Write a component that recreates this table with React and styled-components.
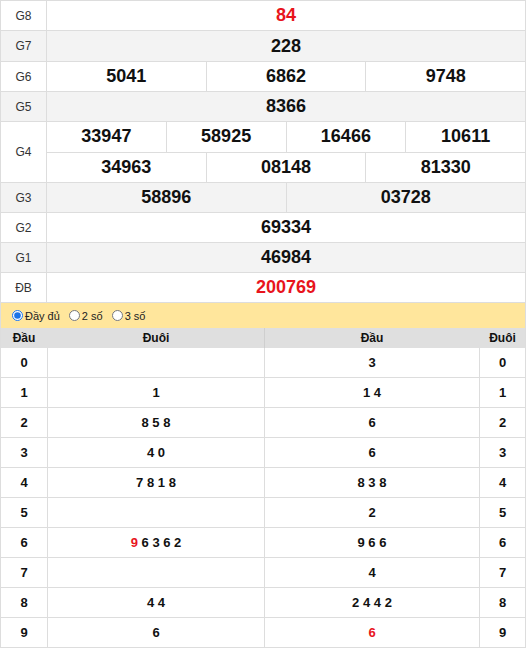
import React from "react";
import styled, { createGlobalStyle } from "styled-components";

const Global = createGlobalStyle`
  html, body { margin: 0; padding: 0; background: #fff; }
  body { font-family: "Liberation Sans", Arial, sans-serif; }
  * { box-sizing: border-box; }
`;

const Wrap = styled.div`
  width: 526px;
  border-left: 1px solid #dddddd;
  border-right: 1px solid #dddddd;
  border-top: 1px solid #dddddd;
`;

const Row = styled.div`
  display: flex;
  height: ${(p) => p.$h || 30}px;
  background: ${(p) => (p.$alt ? "#f3f3f3" : "#ffffff")};
  border-bottom: 1px solid #dddddd;
`;

const Label = styled.div`
  width: 46px;
  flex: none;
  display: flex;
  align-items: center;
  justify-content: center;
  border-right: 1px solid #dddddd;
  font-size: 12px;
  color: #333;
`;

const Values = styled.div`
  flex: 1;
  display: flex;
  flex-direction: column;
`;

const SubRow = styled.div`
  flex: 1;
  display: flex;
  & + & { border-top: 1px solid #dddddd; }
`;

const Num = styled.div`
  flex: 1;
  display: flex;
  align-items: center;
  justify-content: center;
  font-size: 18px;
  font-weight: bold;
  color: ${(p) => (p.$red ? "#e8141c" : "#111")};
  & + & { border-left: 1px solid #dddddd; }
`;

const Bar = styled.div`
  height: 25px;
  background: #ffe69c;
  display: flex;
  align-items: center;
  padding-left: 11px;
  gap: 9px;
  font-size: 11px;
  color: #222;
`;

const Opt = styled.label`
  display: flex;
  align-items: center;
  gap: 2px;
  input {
    width: 11px;
    height: 11px;
    margin: 0;
    accent-color: #1a73e8;
  }
`;

const Grid = styled.div`
  display: grid;
  grid-template-columns: 46px 217px 215px 46px;
`;

const Head = styled.div`
  height: 20px;
  background: #dfdfdf;
  display: flex;
  align-items: center;
  justify-content: center;
  font-size: 12px;
  font-weight: bold;
  color: #111;
  border-left: 1px solid ${(p) => (p.$split ? "#cfcfcf" : "#dfdfdf")};
  ${(p) => p.$first && "border-left: none;"}
`;

const Cell = styled.div`
  height: 30px;
  display: flex;
  align-items: center;
  justify-content: center;
  font-size: 13px;
  font-weight: bold;
  color: #111;
  border-bottom: 1px solid #dddddd;
  border-left: ${(p) => (p.$first ? "none" : "1px solid #dddddd")};
`;

const Red = styled.span`
  color: #e8141c;
`;

const prizes = [
  { l: "G8", v: [["84"]], red: true },
  { l: "G7", v: [["228"]], alt: true, h: 31 },
  { l: "G6", v: [["5041", "6862", "9748"]] },
  { l: "G5", v: [["8366"]], alt: true },
  { l: "G4", v: [["33947", "58925", "16466", "10611"], ["34963", "08148", "81330"]] },
  { l: "G3", v: [["58896", "03728"]], alt: true },
  { l: "G2", v: [["69334"]] },
  { l: "G1", v: [["46984"]], alt: true },
  { l: "ĐB", v: [["200769"]], red: true },
];

const loto = [
  ["0", "", "3", "0"],
  ["1", "1", "1 4", "1"],
  ["2", "8 5 8", "6", "2"],
  ["3", "4 0", "6", "3"],
  ["4", "7 8 1 8", "8 3 8", "4"],
  ["5", "", "2", "5"],
  ["6", <span><Red>9</Red> 6 3 6 2</span>, "9 6 6", "6"],
  ["7", "", "4", "7"],
  ["8", "4 4", "2 4 4 2", "8"],
  ["9", "6", <Red>6</Red>, "9"],
];

export default function App() {
  return (
    <>
      <Global />
      <Wrap>
        {prizes.map((p) => (
          <Row key={p.l} $alt={p.alt} $h={p.h || p.v.length * 30 + (p.v.length - 1)}>
            <Label>{p.l}</Label>
            <Values>
              {p.v.map((sub, i) => (
                <SubRow key={i}>
                  {sub.map((n, j) => (
                    <Num key={j} $red={p.red}>{n}</Num>
                  ))}
                </SubRow>
              ))}
            </Values>
          </Row>
        ))}
        <Bar>
          <Opt><input type="radio" name="m" defaultChecked />Đầy đủ</Opt>
          <Opt><input type="radio" name="m" />2 số</Opt>
          <Opt><input type="radio" name="m" />3 số</Opt>
        </Bar>
        <Grid>
          <Head $first>Đầu</Head>
          <Head>Đuôi</Head>
          <Head $split>Đầu</Head>
          <Head>Đuôi</Head>
          {loto.map((r, i) => (
            <React.Fragment key={i}>
              <Cell $first>{r[0]}</Cell>
              <Cell>{r[1]}</Cell>
              <Cell>{r[2]}</Cell>
              <Cell>{r[3]}</Cell>
            </React.Fragment>
          ))}
        </Grid>
      </Wrap>
    </>
  );
}
